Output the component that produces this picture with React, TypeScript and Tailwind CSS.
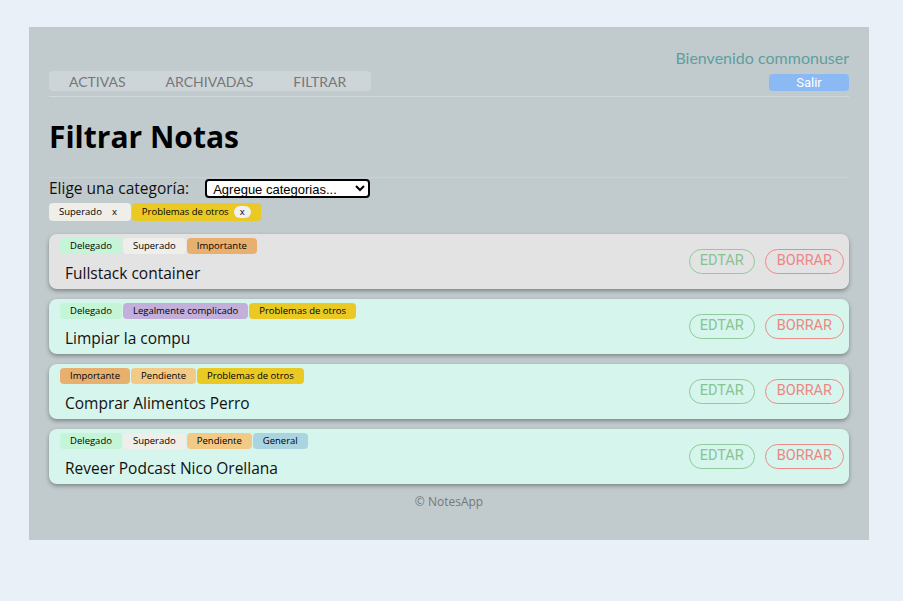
import React from 'react';

const TAGS: Record<string, string> = {
  Delegado: 'bg-[#c4f5d6]',
  Superado: 'bg-[#efeee8]',
  Importante: 'bg-[#e8b06f]',
  'Legalmente complicado': 'bg-[#c2b0da]',
  'Problemas de otros': 'bg-[#eac924]',
  Pendiente: 'bg-[#f2c985]',
  General: 'bg-[#aad4e0]',
};

const notes = [
  { title: 'Fullstack container', tags: ['Delegado', 'Superado', 'Importante'], bg: 'bg-[#e3e3e3]' },
  { title: 'Limpiar la compu', tags: ['Delegado', 'Legalmente complicado', 'Problemas de otros'], bg: 'bg-[#d6f5ec]' },
  { title: 'Comprar Alimentos Perro', tags: ['Importante', 'Pendiente', 'Problemas de otros'], bg: 'bg-[#d6f5ec]' },
  { title: 'Reveer Podcast Nico Orellana', tags: ['Delegado', 'Superado', 'Pendiente', 'General'], bg: 'bg-[#d6f5ec]' },
];

const font = "font-['Trebuchet_MS','Open_Sans',sans-serif]";

const NoteCard = ({ title, tags, bg }: { title: string; tags: string[]; bg: string }) => (
  <div className={`${bg} rounded-lg shadow-[0_2px_4px_rgba(0,0,0,0.35)] h-[55px] flex items-center justify-between pl-[11px] pr-[5px]`}>
    <div className="flex flex-col h-full pt-[4px]">
      <div className="flex gap-px">
        {tags.map(t => (
          <span key={t} className={`${TAGS[t]} text-[9.5px] leading-[16px] h-[16px] px-[10px] rounded-[4px] text-black`}>
            {t}
          </span>
        ))}
      </div>
      <div className="text-[15.5px] text-[#111] pl-[5px] mt-[9px] leading-[20px]">{title}</div>
    </div>
    <div className="flex gap-[10px] font-['Roboto',sans-serif] mt-[-1px]">
      <button className="h-[25px] px-[10px] rounded-full border border-[#8fcb9b] text-[#86c492] text-[14.5px]">EDTAR</button>
      <button className="h-[25px] px-[11px] rounded-full border border-[#f08a8a] text-[#ee8585] text-[14.5px]">BORRAR</button>
    </div>
  </div>
);

export default function App() {
  return (
    <div className={`min-h-[601px] bg-[#e9f0f8] pt-[27px] px-[29px] pb-[62px] ${font}`}>
      <div className="w-[840px] bg-[#c1cbce] px-[20px] pt-[21px] pb-[29px]">
        <header className="flex items-end justify-between border-b border-[#d2d9db] pb-[5px]">
          <nav className="flex bg-[#cdd5d8] rounded-[4px] h-[20px] w-[322px] items-center pl-[20px] gap-[40px] font-['Lato',sans-serif] text-[14px] text-[#777]">
            <span>ACTIVAS</span>
            <span>ARCHIVADAS</span>
            <span>FILTRAR</span>
          </nav>
          <div className="flex flex-col items-end">
            <div className="font-['Lato',sans-serif] text-[16px] text-[#5f9ea0] leading-[20px]">Bienvenido commonuser</div>
            <button className="mt-[6px] w-[80px] h-[17px] rounded-[4px] bg-[#8ab9f4] text-white text-[13px] leading-[17px] font-['Roboto',sans-serif]">
              Salir
            </button>
          </div>
        </header>
        <h1 className="text-[30px] font-bold text-black mt-[20px] leading-[40px]">Filtrar Notas</h1>
        <div className="border-t border-[#cbd2d4] mt-[20px] pt-[1px]">
          <div className="flex items-center gap-[16px] h-[19px]">
            <span className="text-[15.5px] text-[#111]">Elige una categoría:</span>
            <select className="w-[165px] h-[19px] border-2 border-black rounded-[4px] bg-white text-[13px] font-['Liberation_Sans',sans-serif] px-[2px]">
              <option>Agregue categorias...</option>
            </select>
          </div>
          <div className="flex gap-px mt-[5px]">
            <span className="bg-[#efeee8] text-[9.5px] h-[18px] rounded-[4px] pl-[10px] pr-[14px] flex items-center gap-[10px]">
              Superado <span>x</span>
            </span>
            <span className="bg-[#eac924] text-[9.5px] h-[18px] rounded-[4px] pl-[10px] pr-[10px] flex items-center gap-[5px]">
              Problemas de otros <span className="bg-[#f1f1f1] rounded-full px-[6px] leading-[12px]">x</span>
            </span>
          </div>
        </div>
        <div className="flex flex-col gap-[10px] mt-[13px]">
          {notes.map(n => (
            <NoteCard key={n.title} {...n} />
          ))}
        </div>
        <footer className="text-center font-['Open_Sans',sans-serif] text-[12px] text-[#777] mt-[9px]">© NotesApp</footer>
      </div>
    </div>
  );
}
